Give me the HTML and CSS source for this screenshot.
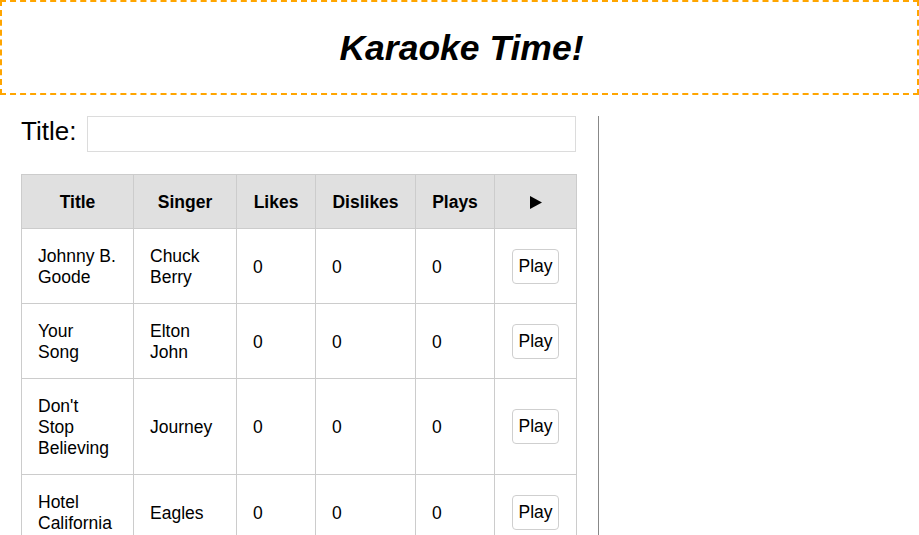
FILE: index.html
```html
<!DOCTYPE html>
<html>
<head>
<meta charset="utf-8">
<link rel="stylesheet" href="styles.css">
</head>
<body>
<header class="banner"><h1>Karaoke Time!</h1></header>
<main class="layout">
  <section class="panel">
    <div class="search">
      <label for="title">Title:</label>
      <input id="title" type="text">
    </div>
    <table class="songs">
      <colgroup>
        <col class="c-title"><col class="c-singer"><col class="c-likes"><col class="c-dislikes"><col class="c-plays"><col class="c-play">
      </colgroup>
      <thead>
        <tr><th>Title</th><th>Singer</th><th>Likes</th><th>Dislikes</th><th>Plays</th><th class="tri"><svg class="tri-icon" width="12" height="13" viewBox="0 0 12 13"><polygon points="0,0 12,6.5 0,13" fill="#000"/></svg></th></tr>
      </thead>
      <tbody>
        <tr><td>Johnny B. Goode</td><td>Chuck Berry</td><td>0</td><td>0</td><td>0</td><td class="act"><button>Play</button></td></tr>
        <tr><td>Your Song</td><td>Elton John</td><td>0</td><td>0</td><td>0</td><td class="act"><button>Play</button></td></tr>
        <tr><td>Don't Stop Believing</td><td>Journey</td><td>0</td><td>0</td><td>0</td><td class="act"><button>Play</button></td></tr>
        <tr><td>Hotel California</td><td>Eagles</td><td>0</td><td>0</td><td>0</td><td class="act"><button>Play</button></td></tr>
      </tbody>
    </table>
  </section>
  <aside class="side"></aside>
</main>
</body>
</html>
```

FILE: styles.css
```css
html, body {
  margin: 0;
  padding: 0;
  background: #fff;
  font-family: "Liberation Sans", Arial, sans-serif;
  color: #000;
}
.banner {
  box-sizing: border-box;
  width: 919px;
  height: 95px;
  border: 2px dashed #ffa500;
  display: flex;
  align-items: center;
  justify-content: center;
}
.banner h1 {
  margin: 0;
  font-size: 35.5px;
  font-weight: bold;
  font-style: italic;
  line-height: 40px;
  position: relative;
  left: 2px;
}
.layout {
  display: flex;
  margin-top: 21px;
}
.panel {
  box-sizing: border-box;
  width: 599px;
  padding: 0 22px 0 21px;
  border-right: 1px solid #888;
  min-height: 420px;
}
.search {
  display: flex;
  align-items: center;
  gap: 11px;
  height: 36px;
}
.search label {
  font-size: 26px;
  line-height: 30px;
  position: relative;
  top: -3px;
}
.search input {
  flex: 1;
  box-sizing: border-box;
  height: 36px;
  border: 1px solid #dcdcdc;
  outline: none;
  margin: 0;
  padding: 0 8px;
  font-size: 17px;
}
.songs {
  margin-top: 22px;
  width: 555px;
  table-layout: fixed;
  border-collapse: collapse;
  font-size: 17.5px;
  line-height: 21px;
}
.c-title { width: 112px; }
.c-singer { width: 103px; }
.c-likes { width: 79px; }
.c-dislikes { width: 100px; }
.c-plays { width: 79px; }
.c-play { width: 82px; }
.songs th, .songs td {
  border: 1px solid #cccccc;
  text-align: left;
  vertical-align: middle;
}
.songs th {
  background: #e0e0e0;
  text-align: center;
  font-weight: bold;
  padding: 17px 4px 15px;
}
.songs td { padding: 17px 16px 15px; }
.tri-icon { display: block; margin: 0 auto; }
.songs td.act {
  text-align: center;
  padding: 16px 4px;
}
.songs button {
  font-family: "Liberation Sans", Arial, sans-serif;
  font-size: 17.5px;
  line-height: 21px;
  background: #fff;
  border: 1px solid #cfcfcf;
  border-radius: 4px;
  padding: 6px 5px 6px 5px;
  color: #000;
  margin: -7px 0;
}
.side { flex: 1; }
```
